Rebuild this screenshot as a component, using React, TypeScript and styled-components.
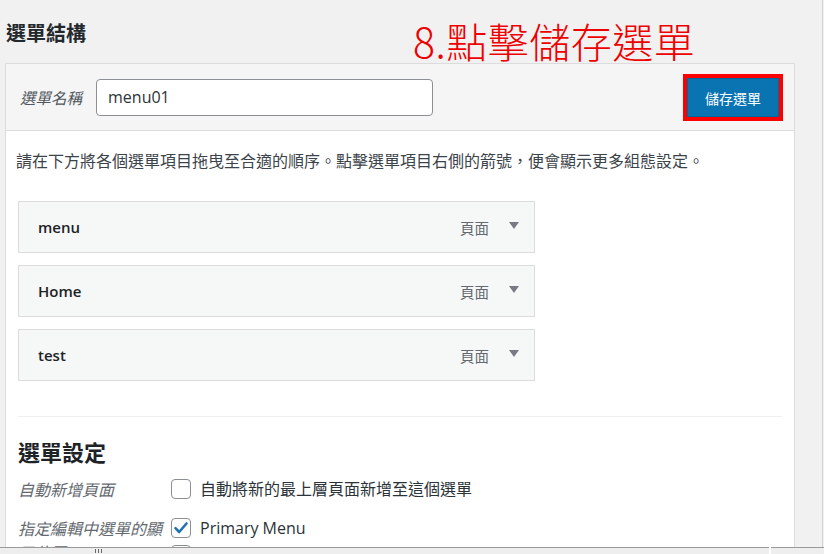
import React from 'react';
import styled, { createGlobalStyle } from 'styled-components';

const GlobalStyle = createGlobalStyle`
  html, body {
    margin: 0;
    padding: 0;
    background: #f1f1f1;
    overflow: hidden;
  }
  body {
    font-family: 'Open Sans', 'Noto Sans CJK TC', sans-serif;
    color: #1d2327;
  }
`;

const Page = styled.div`
  width: 823px;
  height: 554px;
  box-sizing: border-box;
  border-right: 1px solid #d4d4d4;
  overflow: hidden;
`;

const TitleBar = styled.div`
  display: flex;
  align-items: flex-start;
  height: 63px;
`;

const Title = styled.h2`
  margin: 21px 0 0 6px;
  font-size: 20px;
  line-height: 24px;
  font-weight: 700;
  font-family: 'Noto Sans CJK TC', sans-serif;
  color: #23282d;
`;

const Annotation = styled.div`
  margin: 17px 0 0 327px;
  font-size: 41px;
  line-height: 46px;
  font-weight: 300;
  font-family: 'Noto Sans CJK TC', sans-serif;
  color: #ee0000;
  letter-spacing: 0.5px;
  white-space: nowrap;
`;

const Panel = styled.div`
  margin-left: 5px;
  width: 790px;
  box-sizing: border-box;
  border: 1px solid #dcdcde;
  background: #fff;
`;

const PanelHeader = styled.div`
  display: flex;
  align-items: center;
  height: 66px;
  padding: 0 11px 0 14px;
  background: #f5f5f5;
  border-bottom: 1px solid #dcdcde;
`;

const NameLabel = styled.label`
  font-family: 'Noto Sans CJK TC', sans-serif;
  font-style: italic;
  font-size: 15.5px;
  color: #50575e;
  margin-right: 14px;
  white-space: nowrap;
`;

const NameInput = styled.input`
  width: 337px;
  height: 37px;
  box-sizing: border-box;
  border: 1px solid #8c8f94;
  border-radius: 4px;
  padding: 0 11px;
  font-family: 'Open Sans', sans-serif;
  font-size: 16px;
  color: #2c3338;
  background: #fff;
  outline: none;
`;

const SaveFrame = styled.div`
  margin-left: auto;
  border: 4px solid #ff0000;
  margin-top: 1px;
`;

const SaveButton = styled.button`
  display: block;
  width: 92px;
  height: 39px;
  border: 1px solid #006799;
  background: #0a73b1;
  color: #fff;
  font-family: 'Noto Sans CJK TC', sans-serif;
  font-size: 14px;
  cursor: pointer;
`;

const PanelBody = styled.div`
  padding: 17px 12px 40px 12px;
`;

const Hint = styled.p`
  margin: 0 0 29px -2px;
  font-family: 'Noto Sans CJK TC', sans-serif;
  font-size: 16px;
  line-height: 24px;
  color: #3c434a;
  white-space: nowrap;
`;

const ItemList = styled.ul`
  list-style: none;
  margin: 0;
  padding: 0;
  display: flex;
  flex-direction: column;
  gap: 12px;
`;

const MenuItem = styled.li`
  width: 517px;
  height: 52px;
  box-sizing: border-box;
  display: flex;
  align-items: center;
  padding: 0 15px 0 19px;
  background: #f6f7f7;
  border: 1px solid #dcdcde;
`;

const ItemTitle = styled.span`
  font-family: 'Open Sans', sans-serif;
  font-weight: 600;
  font-size: 15px;
  color: #1d2327;
`;

const ItemType = styled.span`
  margin-left: auto;
  font-family: 'Noto Sans CJK TC', sans-serif;
  font-size: 14.5px;
  color: #646970;
`;

const Arrow = styled.span`
  margin-left: 20px;
  width: 0;
  height: 0;
  border-left: 5px solid transparent;
  border-right: 5px solid transparent;
  border-top: 7px solid #787c82;
  margin-top: -4px;
`;

const Divider = styled.hr`
  margin: 35px 0 0 0;
  border: 0;
  border-top: 1px solid #f0f0f1;
`;

const SectionTitle = styled.h3`
  margin: 19px 0 11px 0;
  font-family: 'Noto Sans CJK TC', sans-serif;
  font-size: 22px;
  line-height: 30px;
  font-weight: 700;
  color: #1d2327;
`;

const SettingRow = styled.div`
  display: flex;
  align-items: flex-start;
  margin-bottom: 15px;
`;

const SettingLabel = styled.div`
  width: 153px;
  flex-shrink: 0;
  font-family: 'Noto Sans CJK TC', sans-serif;
  font-style: italic;
  font-size: 16px;
  line-height: 24px;
  color: #646970;
`;

const OptionList = styled.div`
  display: flex;
  flex-direction: column;
  gap: 3px;
`;

const Option = styled.label`
  display: flex;
  align-items: flex-start;
`;

const Check = styled.span`
  width: 20px;
  height: 20px;
  box-sizing: border-box;
  margin-top: 2px;
  border: 1px solid #8c8f94;
  border-radius: 4px;
  background: #fff;
  display: flex;
  align-items: center;
  justify-content: center;
  flex-shrink: 0;
`;

const SettingText = styled.span`
  margin-left: 9px;
  font-family: 'Open Sans', 'Noto Sans CJK TC', sans-serif;
  font-size: 16px;
  line-height: 24px;
  color: #2c3338;
`;

const BottomBar = styled.div`
  position: fixed;
  left: 0;
  right: 0;
  bottom: 0;
  height: 7px;
  display: flex;
  gap: 2px;
`;

const BarTrack = styled.div<{ $width?: number }>`
  ${p => (p.$width ? `width: ${p.$width}px; flex-shrink: 0;` : 'flex: 1;')}
  box-sizing: border-box;
  background: #eeeeee;
  border-top: 1px solid #9a9a9a;
  display: flex;
  align-items: flex-start;
  padding-left: 94px;
`;

const CheckMark = () => (
  <svg width="16" height="16" viewBox="0 0 16 16">
    <path d="M2.5 8.2 L6.2 12 L13.5 3.5" fill="none" stroke="#2271b1" strokeWidth="2.6" strokeLinecap="round" strokeLinejoin="round" />
  </svg>
);

const GripDots = () => (
  <svg width="9" height="5" viewBox="0 0 9 5">
    <rect x="1" y="1" width="1" height="4" fill="#666" />
    <rect x="4" y="1" width="1" height="4" fill="#666" />
    <rect x="7" y="1" width="1" height="4" fill="#666" />
  </svg>
);

const items = ['menu', 'Home', 'test'];

export default function App() {
  return (
    <>
      <GlobalStyle />
      <Page>
        <TitleBar>
          <Title>選單結構</Title>
          <Annotation>8.點擊儲存選單</Annotation>
        </TitleBar>
        <Panel>
          <PanelHeader>
            <NameLabel>選單名稱</NameLabel>
            <NameInput defaultValue="menu01" />
            <SaveFrame>
              <SaveButton>儲存選單</SaveButton>
            </SaveFrame>
          </PanelHeader>
          <PanelBody>
            <Hint>請在下方將各個選單項目拖曳至合適的順序。點擊選單項目右側的箭號，便會顯示更多組態設定。</Hint>
            <ItemList>
              {items.map(name => (
                <MenuItem key={name}>
                  <ItemTitle>{name}</ItemTitle>
                  <ItemType>頁面</ItemType>
                  <Arrow />
                </MenuItem>
              ))}
            </ItemList>
            <Divider />
            <SectionTitle>選單設定</SectionTitle>
            <SettingRow>
              <SettingLabel>自動新增頁面</SettingLabel>
              <Option>
                <Check />
                <SettingText>自動將新的最上層頁面新增至這個選單</SettingText>
              </Option>
            </SettingRow>
            <SettingRow>
              <SettingLabel>指定編輯中選單的顯示位置</SettingLabel>
              <OptionList>
                <Option>
                  <Check>
                    <CheckMark />
                  </Check>
                  <SettingText>Primary Menu</SettingText>
                </Option>
                <Option>
                  <Check />
                </Option>
              </OptionList>
            </SettingRow>
          </PanelBody>
        </Panel>
      </Page>
      <BottomBar>
        <BarTrack $width={769}>
          <GripDots />
        </BarTrack>
        <BarTrack />
      </BottomBar>
    </>
  );
}
